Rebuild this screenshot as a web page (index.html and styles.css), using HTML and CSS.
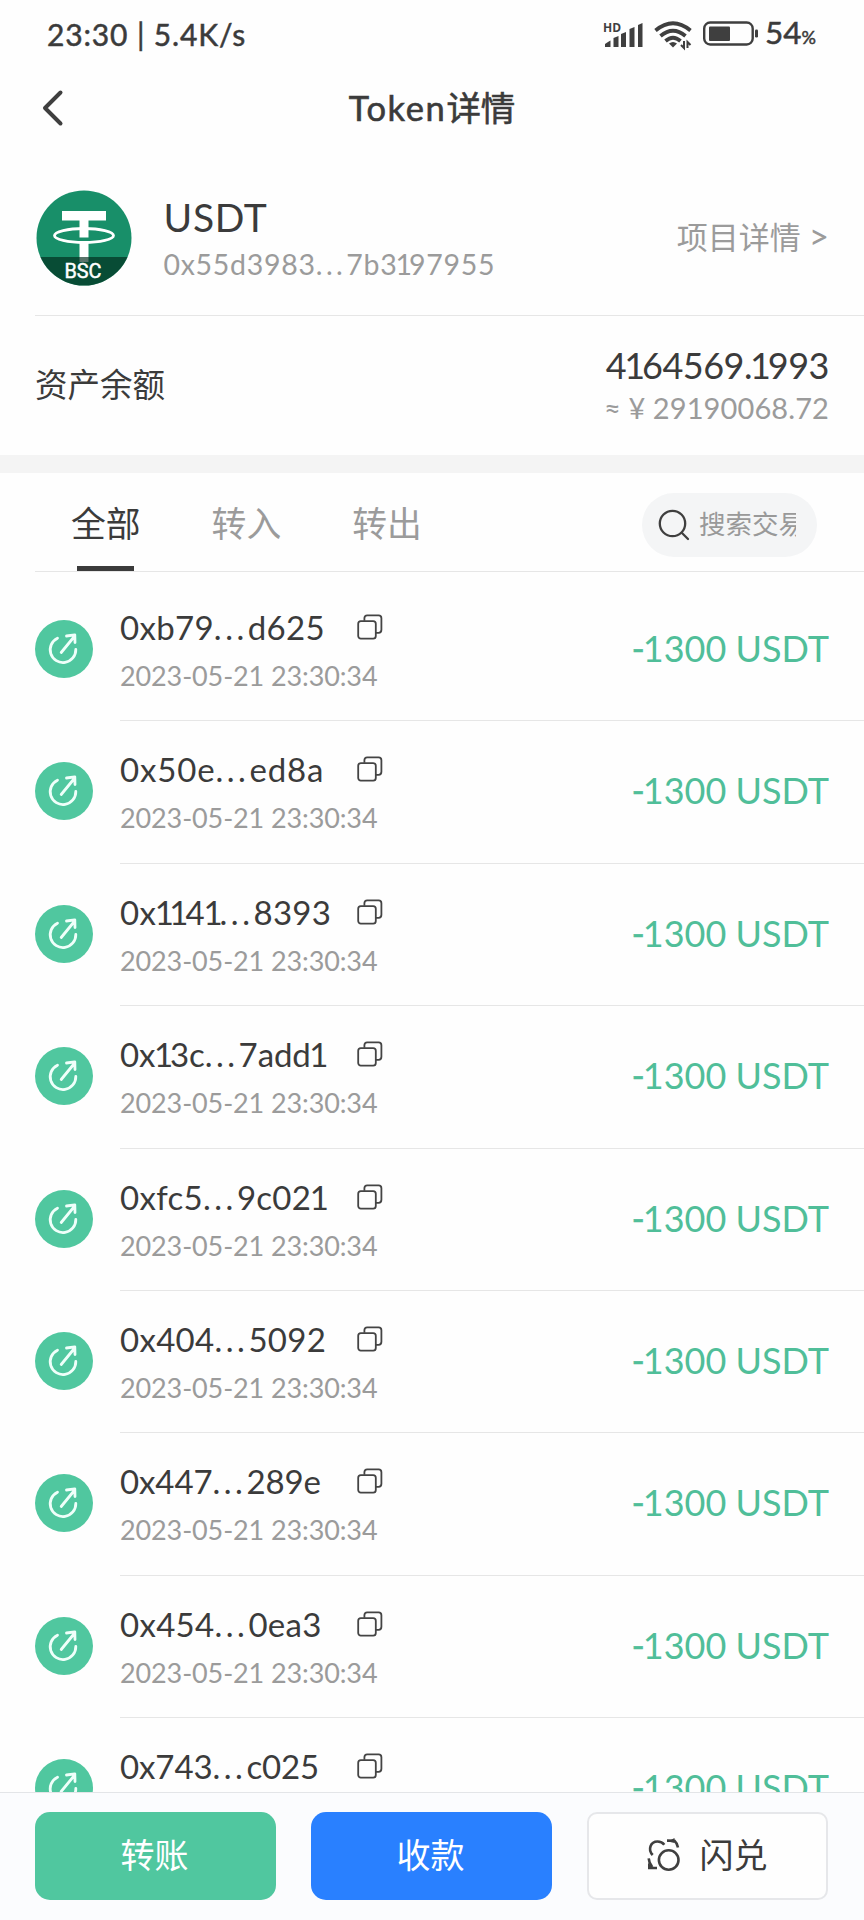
FILE: index.html
```html
<!DOCTYPE html>
<html lang="zh-CN">
<head>
<meta charset="utf-8">
<title>Token详情</title>
<link rel="stylesheet" href="styles.css">
</head>
<body>
<svg class="defs" width="0" height="0" aria-hidden="true">
  <symbol id="copy" viewBox="0 0 26 26"><g fill="none" stroke="#444" stroke-width="1.8"><rect x="1.2" y="7.2" width="17.6" height="17.4" rx="2.6"/><path d="M7.4 6.8V4.2Q7.4 1.4 10.2 1.4H21.6Q24.4 1.4 24.4 4.2V15.8Q24.4 18.8 21.6 18.8H19"/></g></symbol>
  <symbol id="out" viewBox="0 0 58 58"><circle cx="29" cy="29" r="29" fill="#50c79f"/><g fill="none" stroke="#effffa" stroke-width="2.8" stroke-linecap="round" stroke-linejoin="round"><path d="M22.500 18.200A12.800 12.800 0 1 0 40.800 29.500"/><path d="M26.200 32.500L38.500 17.500M31.500 16L39.800 14.800L40 22.500"/></g></symbol>
</svg>
<div class="screen">
  <header class="status">
    <span class="clock">23:30 | 5.4K/s</span>
    <span class="indicators">
      <svg class="signal" width="42" height="30" viewBox="0 0 42 30"><text class="hd" x="0" y="9.500">HD</text><g fill="#3f3f3f"><path d="M2 22Q6 19 7.500 18.500V25H2z"/><path d="M10.500 16L15.500 14V25H10.500z"/><path d="M18 12L23 10V25H18z"/><path d="M26.500 7L31.500 5V25H26.500z"/><path d="M35 3L39.500 1V25H35z"/></g></svg>
      <svg class="wifi" width="38" height="30" viewBox="0 0 38 30"><g fill="none" stroke="#3f3f3f" stroke-width="3.800"><path d="M1.500 9.500Q19 -5 36.500 9.500"/><path d="M6.500 15Q19 4.500 31.500 15"/><path d="M11.500 20Q19 13.500 26.500 20"/></g><path d="M15 22.500Q19 19.500 23 22.500L19 26.500z" fill="#3f3f3f"/><path d="M30 20v7l-3-3M33.500 27v-6l3 3" fill="none" stroke="#3f3f3f" stroke-width="2"/></svg>
      <svg class="battery" width="56" height="26" viewBox="0 0 56 26"><rect x="1.200" y="1.500" width="48.500" height="22" rx="6" fill="none" stroke="#3f3f3f" stroke-width="2.400"/><rect x="6" y="5.500" width="21" height="14.500" rx="1" fill="#3f3f3f"/><rect x="52" y="8.500" width="3" height="8" rx="1.300" fill="#3f3f3f"/></svg>
      <span class="pct">54<small>%</small></span>
    </span>
  </header>
  <nav class="titlebar">
    <svg class="back" width="22" height="38" viewBox="0 0 22 38"><path d="M19.500 3.500L4 19L19.500 34.500" fill="none" stroke="#3f3f3f" stroke-width="4" stroke-linecap="round" stroke-linejoin="round"/></svg>
    <h1><span class="latin">Token</span>详情</h1>
  </nav>
  <section class="token">
    <svg class="logo" width="96" height="96" viewBox="0 0 96 96"><clipPath id="disc"><circle cx="48" cy="48" r="47.500"/></clipPath><g clip-path="url(#disc)"><path fill="#188f69" d="M0 0h96v96H0z"/><path fill="#fff" d="M26 21h44v9.500H52.500v17h-9v-17H26zM43.500 51.500h9V72h-9z"/><ellipse cx="48" cy="45.500" rx="29.500" ry="7" fill="none" stroke="#fff" stroke-width="2.800"/><path fill="#00281a" fill-opacity=".65" d="M0 67h96v29H0z"/><text class="chain" x="47" y="87.500" text-anchor="middle" textLength="37" lengthAdjust="spacingAndGlyphs">BSC</text></g></svg>
    <div class="names"><div class="symbol">USDT</div><div class="contract">0x55d3983<span class="dots">...</span>7b3<span class="one">1</span>97955</div></div>
    <div class="project">项目详情 <span class="gt">&gt;</span></div>
  </section>
  <section class="balance">
    <div class="label">资产余额</div>
    <div class="sums"><div class="sum">4<span class="one">1</span>64569.<span class="one">1</span>993</div><div class="fiat">≈ ¥ 29190068.72</div></div>
  </section>
  <div class="band"></div>
  <div class="tabs">
    <span class="tab active">全部</span><span class="tab">转入</span><span class="tab">转出</span>
    <div class="search"><svg width="32" height="32" viewBox="0 0 32 32"><g fill="none" stroke="#3f3f3f" stroke-width="2.300" stroke-linecap="round"><circle cx="14.500" cy="14.500" r="12.700"/><path d="M24 24L30 30"/></g></svg><span class="query">搜索交易</span></div>
  </div>
  <main class="list">
    <article class="tx"><svg class="dir"><use href="#out"/></svg><div class="body"><div><div class="hash"><span>0xb79<span class="dots">...</span>d625</span><svg class="copy"><use href="#copy"/></svg></div><time>2023-05-21 23:30:34</time></div><b class="amount"><i>-</i>1300 USDT</b></div></article>
    <article class="tx"><svg class="dir"><use href="#out"/></svg><div class="body"><div><div class="hash"><span class="wide">0x50e<span class="dots">...</span>ed8a</span><svg class="copy"><use href="#copy"/></svg></div><time>2023-05-21 23:30:34</time></div><b class="amount"><i>-</i>1300 USDT</b></div></article>
    <article class="tx"><svg class="dir"><use href="#out"/></svg><div class="body"><div><div class="hash"><span>0x<span class="one">1</span><span class="one">1</span>4<span class="one">1</span><span class="dots">...</span>8393</span><svg class="copy"><use href="#copy"/></svg></div><time>2023-05-21 23:30:34</time></div><b class="amount"><i>-</i>1300 USDT</b></div></article>
    <article class="tx"><svg class="dir"><use href="#out"/></svg><div class="body"><div><div class="hash"><span class="tight">0x<span class="one">1</span>3c<span class="dots">...</span>7add<span class="one">1</span></span><svg class="copy"><use href="#copy"/></svg></div><time>2023-05-21 23:30:34</time></div><b class="amount"><i>-</i>1300 USDT</b></div></article>
    <article class="tx"><svg class="dir"><use href="#out"/></svg><div class="body"><div><div class="hash"><span>0xfc5<span class="dots">...</span>9c02<span class="one">1</span></span><svg class="copy"><use href="#copy"/></svg></div><time>2023-05-21 23:30:34</time></div><b class="amount"><i>-</i>1300 USDT</b></div></article>
    <article class="tx"><svg class="dir"><use href="#out"/></svg><div class="body"><div><div class="hash"><span>0x404<span class="dots">...</span>5092</span><svg class="copy"><use href="#copy"/></svg></div><time>2023-05-21 23:30:34</time></div><b class="amount"><i>-</i>1300 USDT</b></div></article>
    <article class="tx"><svg class="dir"><use href="#out"/></svg><div class="body"><div><div class="hash"><span class="tight">0x447<span class="dots">...</span>289e</span><svg class="copy"><use href="#copy"/></svg></div><time>2023-05-21 23:30:34</time></div><b class="amount"><i>-</i>1300 USDT</b></div></article>
    <article class="tx"><svg class="dir"><use href="#out"/></svg><div class="body"><div><div class="hash"><span>0x454<span class="dots">...</span>0ea3</span><svg class="copy"><use href="#copy"/></svg></div><time>2023-05-21 23:30:34</time></div><b class="amount"><i>-</i>1300 USDT</b></div></article>
    <article class="tx"><svg class="dir"><use href="#out"/></svg><div class="body"><div><div class="hash"><span class="tight">0x743<span class="dots">...</span>c025</span><svg class="copy"><use href="#copy"/></svg></div></div><b class="amount"><i>-</i>1300 USDT</b></div></article>
  </main>
  <footer class="actions">
    <button class="send">转账</button><button class="receive">收款</button>
    <button class="swap"><svg width="34" height="34" viewBox="0 0 34 34"><g fill="none" stroke="#3f3f3f" stroke-width="2.600"><circle cx="22.700" cy="23" r="9.800"/><path d="M6.700 18C1.500 12.500 4.500 4.500 11.500 4.500Q16 4.500 18.300 7.700M21 3.600L28.500 3.800Q31 6 32 10.500M2.700 21.300Q3 26 6 29.500M2 31H11"/></g><path d="M22 4.500L28.500 1V6zM2 32V26L9 31z" fill="#3f3f3f"/></svg>闪兑</button>
  </footer>
</div>
</body>
</html>
```
FILE: styles.css
```css
* { box-sizing: border-box; }
body { margin: 0; background: #fefefe; color: #3b3b3b; font-family: Lato, "Noto Sans CJK SC", sans-serif; }
svg { display: block; flex: none; overflow: visible; }
.defs { position: absolute; }
.screen { width: 864px; height: 1920px; display: flex; flex-direction: column; overflow: hidden; }
.status { height: 68px; padding: 0 48px 1px 47px; display: flex; align-items: center; justify-content: space-between; flex: none; }
.clock { font-size: 30px; font-weight: 400; letter-spacing: .85px; -webkit-text-stroke: .5px; white-space: nowrap; }
.indicators { display: flex; align-items: center; }
.signal { margin-right: 9px; margin-top: 6px; }
.hd { font: 700 12px "Open Sans", sans-serif; fill: #3f3f3f; }
.wifi { margin-right: 11px; margin-top: 4px; }
.battery { margin-right: 6px; }
.pct { font-size: 31.500px; -webkit-text-stroke: .5px; line-height: 40px; padding-top: 2px; white-space: nowrap; }
.pct small { font-size: 18px; }
.titlebar { height: 80px; display: flex; align-items: center; padding: 0 41px; flex: none; }
h1 { flex: 1; margin: 0 22px 0 0; padding-bottom: 1px; text-align: center; font-size: 34.500px; font-weight: 400; line-height: 48px; -webkit-text-stroke: .6px; }
.latin { letter-spacing: 1.600px; }
.token { height: 168px; margin-left: 35px; padding: 12px 35px 0 0; display: flex; align-items: center; border-bottom: 1px solid #e6e6e6; flex: none; }
.logo { margin-left: .5px; }
.chain { font: 400 21px Roboto, sans-serif; fill: #fff; stroke: #fff; stroke-width: .5px; }
.names { margin: 5px 0 0 32px; flex: 1; white-space: nowrap; }
.symbol { font-size: 39px; line-height: 46px; letter-spacing: .7px; }
.contract { font-size: 28.500px; line-height: 44px; padding-top: 2px; color: #9b9b9b; letter-spacing: .7px; }
.dots { letter-spacing: 3.500px; }
.one { margin-left: -2px; letter-spacing: -3px; }
.hash .one { margin-left: -1.500px; }
.project { color: #9b9b9b; font-size: 31px; line-height: 44px; padding-bottom: 2px; }
.gt { font-size: 35px; line-height: 30px; }
.balance { height: 139px; padding: 0 35px; display: flex; align-items: center; justify-content: space-between; flex: none; }
.label { font-size: 32.500px; padding-bottom: 6px; }
.sums { text-align: right; white-space: nowrap; padding-top: 1px; }
.sum { font-size: 36px; line-height: 44px; letter-spacing: -.5px; }
.fiat { font-size: 29px; line-height: 42px; color: #9b9b9b; letter-spacing: .1px; }
.band { height: 18px; background: #f4f4f4; flex: none; }
.tabs { height: 99px; margin-left: 35px; padding: 0 47px 0 36px; display: flex; align-items: center; gap: 71px; border-bottom: 1px solid #e6e6e6; flex: none; font-size: 34.800px; }
.tab { height: 98px; line-height: 101px; color: #9b9b9b; display: flex; flex-direction: column; align-items: center; }
.tab.active { color: #3b3b3b; }
.tab.active::after { content: ""; width: 57px; height: 5px; margin: -8px 0 0; background: #3b3b3b; }
.search { margin-left: auto; margin-top: 5px; width: 175px; height: 64px; border-radius: 32px; background: #f4f5f6; display: flex; align-items: center; padding-left: 16px; }
.query { margin-left: 9px; width: 97px; overflow: hidden; white-space: nowrap; color: #999; font-size: 26.500px; line-height: 40px; padding-bottom: 2px; }
.list { flex: 1; min-height: 0; overflow: hidden; padding-top: 7px; }
.tx { height: 142.400px; padding-left: 35px; display: flex; }
.dir { width: 58px; height: 58px; margin-top: 41px; }
.body { flex: 1; margin-left: 27px; padding-right: 35px; border-bottom: 1px solid #e6e6e6; display: flex; justify-content: space-between; white-space: nowrap; }
.hash { height: 50px; margin-top: 23px; display: grid; grid-template-columns: 237px 26px; align-items: center; font-size: 33px; letter-spacing: .3px; }
.wide { letter-spacing: .85px; }
.tight { letter-spacing: -.1px; }
.copy { width: 26px; height: 26px; }
time { display: block; font-size: 27px; line-height: 46px; color: #9b9b9b; letter-spacing: -.12px; padding-top: 1px; }
.amount { font-weight: 400; font-size: 36px; line-height: 50px; margin-top: 44px; color: #50be99; }
.amount i { font-style: normal; margin-right: -2px; -webkit-text-stroke: .4px; }
.actions { height: 128px; border-top: 1px solid #e3e5e8; background: #fbfcfe; display: grid; grid-template-columns: repeat(3, 241px); gap: 35px; padding: 19px 35px; flex: none; }
button { height: 88px; border: 0; border-radius: 15px; padding: 0 2px 5px 0; font: 400 34px "Noto Sans CJK SC", sans-serif; color: #fff; display: flex; align-items: center; justify-content: center; }
.send { background: #50c79f; }
.receive { background: #2980ff; }
.swap { background: #fefefe; border: 2px solid #e6e7ea; border-radius: 10px; color: #3b3b3b; gap: 20px; }
```
